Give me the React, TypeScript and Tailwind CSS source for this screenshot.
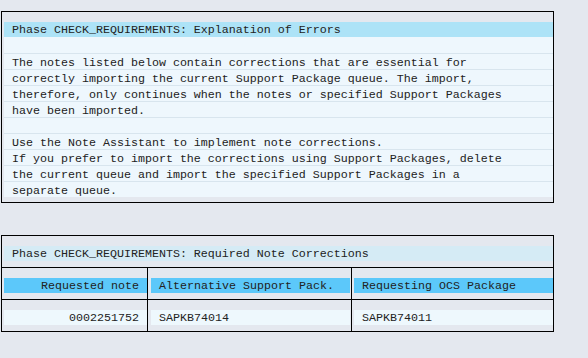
import React from "react";

const mono = { fontFamily: '"Liberation Mono", "Courier New", monospace' };

const lines = [
  "",
  "The notes listed below contain corrections that are essential for",
  "correctly importing the current Support Package queue. The import,",
  "therefore, only continues when the notes or specified Support Packages",
  "have been imported.",
  "",
  "Use the Note Assistant to implement note corrections.",
  "If you prefer to import the corrections using Support Packages, delete",
  "the current queue and import the specified Support Packages in a",
  "separate queue.",
];

function Stripe({
  children,
  bg,
  align = "left",
}: {
  children?: React.ReactNode;
  bg: string;
  align?: "left" | "right";
}) {
  return (
    <div
      className={`h-[15px] leading-[17px] whitespace-pre px-[8px] ${bg} ${
        align === "right" ? "text-right" : "text-left"
      }`}
    >
      {children}
    </div>
  );
}

export default function App() {
  return (
    <div
      className="min-h-screen w-[588px] h-[358px] bg-[#E4E8EF] pt-[11px] pl-[1px] text-[11.67px] text-[#222222]"
      style={mono}
    >
      <div className="w-[553px] border border-black pt-[10px] pb-[5px] pl-[2px]">
        <div className="h-[15px] leading-[17px] whitespace-pre pl-[8px] bg-[#ADE3F7]">
          Phase CHECK_REQUIREMENTS: Explanation of Errors
        </div>
        {lines.map((l, i) => (
          <div
            key={i}
            className={`bg-[#EEF7FD] whitespace-pre pl-[8px] ${
              i === 0 ? "h-[16px] leading-[18px]" : "h-[16px] leading-[16px] pt-[1px] border-t border-[#D8E5EE]"
            }`}
          >
            {l}
          </div>
        ))}
      </div>

      <div className="w-[553px] border border-black mt-[32px]">
        <div className="pt-[10px] pb-[6px] pl-[2px]">
          <Stripe bg="bg-[#D5EBF5]">Phase CHECK_REQUIREMENTS: Required Note Corrections</Stripe>
        </div>
        <div className="flex border-t border-black">
          <div className="w-[146px] border-r border-black pt-[10px] pb-[6px] pl-[2px]">
            <Stripe bg="bg-[#5CC8FA]" align="right">Requested note</Stripe>
          </div>
          <div className="w-[204px] border-r border-black pt-[10px] pb-[6px] pl-[3px] pr-[1px]">
            <Stripe bg="bg-[#5CC8FA]">Alternative Support Pack.</Stripe>
          </div>
          <div className="flex-1 pt-[10px] pb-[6px] pl-[2px]">
            <Stripe bg="bg-[#5CC8FA]">Requesting OCS Package</Stripe>
          </div>
        </div>
        <div className="flex border-t border-black">
          <div className="w-[146px] border-r border-black pt-[10px] pb-[6px] pl-[2px]">
            <Stripe bg="bg-[#EEF8FD]" align="right">0002251752</Stripe>
          </div>
          <div className="w-[204px] border-r border-black pt-[10px] pb-[6px] pl-[3px] pr-[1px]">
            <Stripe bg="bg-[#EEF8FD]">SAPKB74014</Stripe>
          </div>
          <div className="flex-1 pt-[10px] pb-[6px] pl-[2px]">
            <Stripe bg="bg-[#EEF8FD]">SAPKB74011</Stripe>
          </div>
        </div>
      </div>
    </div>
  );
}
